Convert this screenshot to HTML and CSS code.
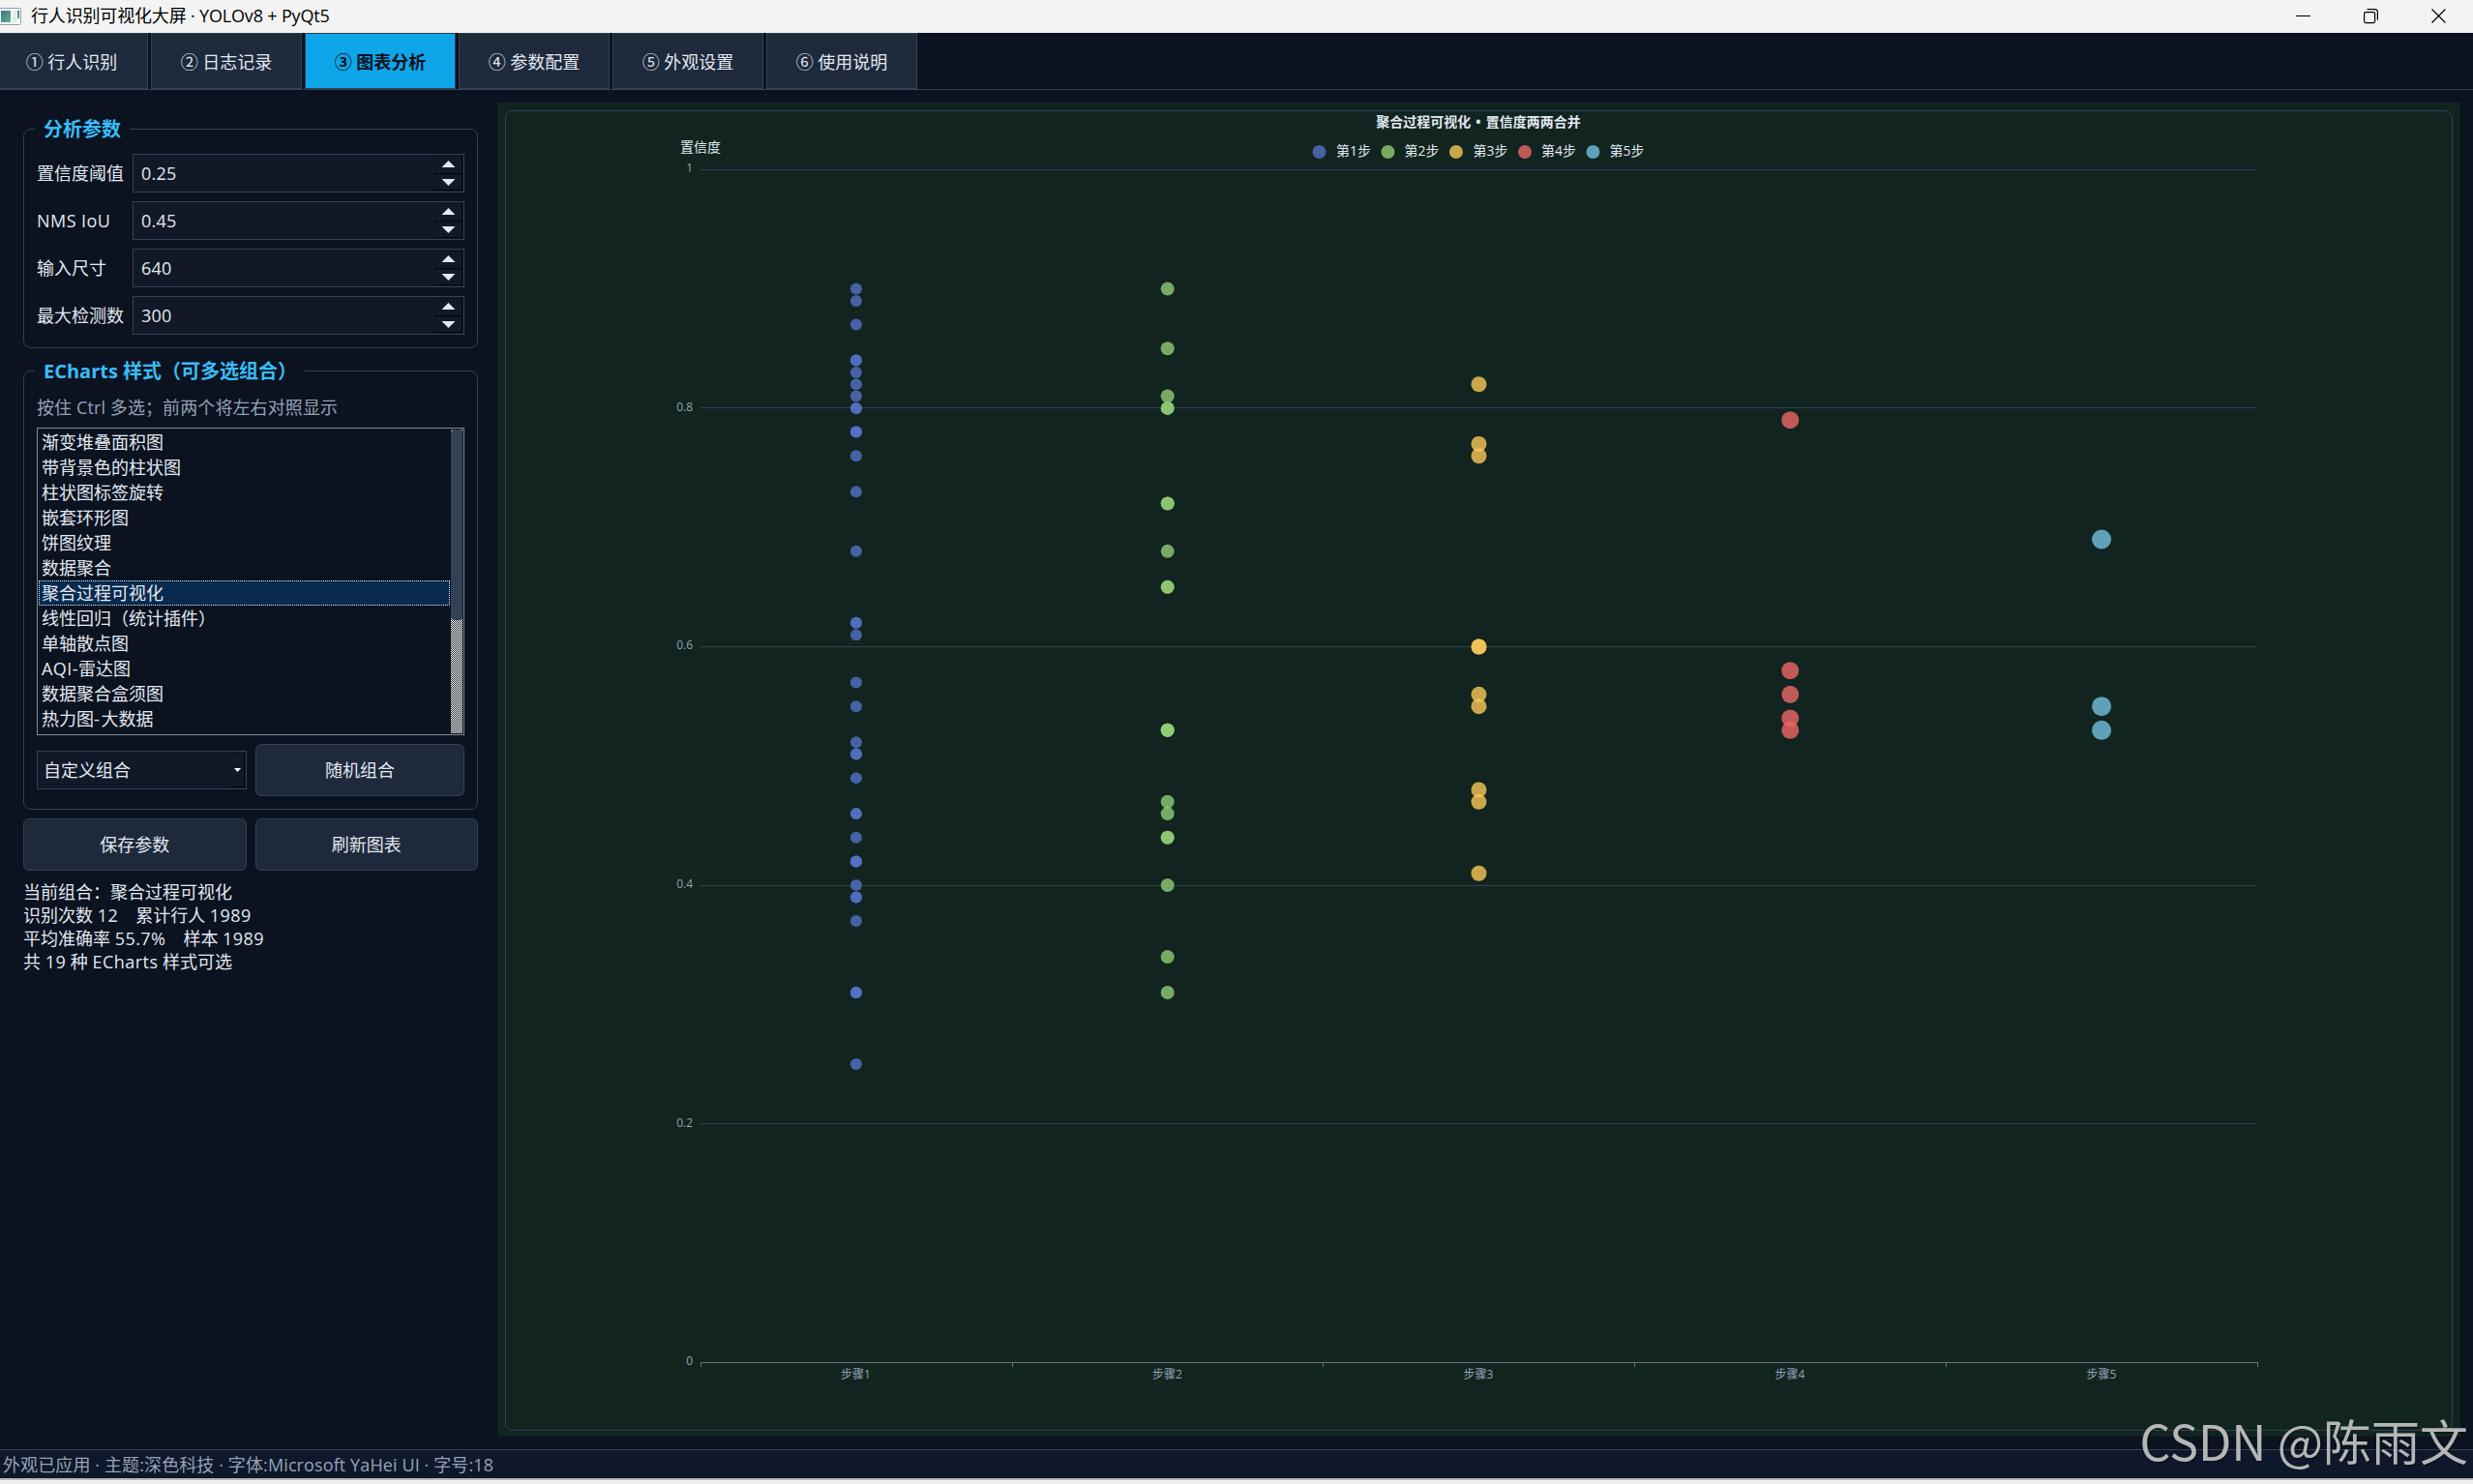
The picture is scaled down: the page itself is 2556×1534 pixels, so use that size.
FILE: index.html
```html
<!DOCTYPE html>
<html lang="zh-CN">
<head>
<meta charset="utf-8">
<title>行人识别可视化大屏 · YOLOv8 + PyQt5</title>
<link rel="stylesheet" href="styles.css">
</head>
<body>
<div class="window">
  <header class="titlebar">
    <svg class="app-icon" width="22" height="18" viewBox="0 0 22 18">
      <defs><linearGradient id="ig" x1="0" y1="0" x2="1" y2="1"><stop offset="0" stop-color="#3f6f8f"/><stop offset="1" stop-color="#5fb583"/></linearGradient></defs>
      <rect x="-1" y=".5" width="22.5" height="17" rx="1" fill="#f7f8f9" stroke="#9aa0a6"/>
      <rect x="1" y="3" width="10" height="12" fill="url(#ig)"/>
      <rect x="13" y="3" width="4" height="12" fill="#e6e9ec"/>
      <rect x="18" y="3" width="2" height="8" fill="url(#ig)"/>
    </svg>
    <span class="window-title">行人识别可视化大屏 · YOLOv8 + PyQt5</span>
    <div class="window-controls">
      <svg width="16" height="16" viewBox="0 0 16 16"><path d="M0 7.5h15" stroke="#000" fill="none"/></svg>
      <svg width="16" height="16" viewBox="0 0 16 16"><rect x=".6" y="3.6" width="11" height="11" rx="1.5" stroke="#000" stroke-width="1.2" fill="none"/><path d="M3.5 .7H12a2.4 2.4 0 0 1 2.4 2.4V11.5" stroke="#000" stroke-width="1.2" fill="none"/></svg>
      <svg width="16" height="16" viewBox="0 0 16 16"><path d="M.5 .5l14 14M14.5 .5l-14 14" stroke="#000" stroke-width="1.2" fill="none"/></svg>
    </div>
  </header>

  <nav class="tabs">
    <div class="tab first">① 行人识别</div>
    <div class="tab">② 日志记录</div>
    <div class="tab active">③ 图表分析</div>
    <div class="tab">④ 参数配置</div>
    <div class="tab">⑤ 外观设置</div>
    <div class="tab">⑥ 使用说明</div>
  </nav>

  <main class="content">
    <aside class="sidebar">
      <fieldset class="group params">
        <legend>分析参数</legend>
        <div class="row"><span class="label">置信度阈值</span><div class="spin"><span>0.25</span><div class="steps"><i class="up"></i><i class="down"></i></div></div></div>
        <div class="row"><span class="label latin">NMS IoU</span><div class="spin"><span>0.45</span><div class="steps"><i class="up"></i><i class="down"></i></div></div></div>
        <div class="row"><span class="label">输入尺寸</span><div class="spin"><span>640</span><div class="steps"><i class="up"></i><i class="down"></i></div></div></div>
        <div class="row"><span class="label">最大检测数</span><div class="spin"><span>300</span><div class="steps"><i class="up"></i><i class="down"></i></div></div></div>
      </fieldset>

      <fieldset class="group styles">
        <legend class="wide">ECharts 样式（可多选组合）</legend>
        <div class="hint">按住 Ctrl 多选；前两个将左右对照显示</div>
        <div class="listbox">
          <ul class="list">
            <li>渐变堆叠面积图</li>
            <li>带背景色的柱状图</li>
            <li>柱状图标签旋转</li>
            <li>嵌套环形图</li>
            <li>饼图纹理</li>
            <li>数据聚合</li>
            <li class="selected">聚合过程可视化</li>
            <li>线性回归（统计插件）</li>
            <li>单轴散点图</li>
            <li><span class="latin">AQI-</span>雷达图</li>
            <li>数据聚合盒须图</li>
            <li>热力图<span class="dash">-</span>大数据</li>
          </ul>
          <div class="scrollbar"><div class="thumb"></div></div>
        </div>
        <div class="combo-row">
          <div class="combo"><span>自定义组合</span><div class="drop"><i></i></div></div>
          <div class="button">随机组合</div>
        </div>
      </fieldset>

      <div class="actions">
        <div class="button">保存参数</div>
        <div class="button">刷新图表</div>
      </div>
      <div class="summary">
        <div>当前组合：聚合过程可视化</div>
        <div>识别次数 <span class="latin">12</span>　累计行人 <span class="latin">1989</span></div>
        <div>平均准确率 <span class="latin">55.7%</span>　样本 <span class="latin">1989</span></div>
        <div>共 <span class="latin">19</span> 种 <span class="latin">ECharts</span> 样式可选</div>
      </div>
    </aside>

    <section class="panel">
      <div class="frame">
        <svg class="chart" viewBox="523 115 2011 1363" width="2011" height="1363">
          <text class="chart-title" x="1528" y="131">聚合过程可视化 • 置信度两两合并</text>
          <g class="legend">
            <circle class="s1" cx="1363.5" cy="157" r="7"/><text x="1381" y="161">第1步</text>
            <circle class="s2" cx="1434.5" cy="157" r="7"/><text x="1451.5" y="161">第2步</text>
            <circle class="s3" cx="1505" cy="157" r="7"/><text x="1522.5" y="161">第3步</text>
            <circle class="s4" cx="1576" cy="157" r="7"/><text x="1593" y="161">第4步</text>
            <circle class="s5" cx="1646.5" cy="157" r="7"/><text x="1663.5" y="161">第5步</text>
          </g>
          <text class="axis-name" x="703" y="157">置信度</text>
          <path class="grid" d="M724 175.5H2333M724 421.5H2333M724 668.5H2333M724 915.5H2333M724 1161.5H2333"/>
          <path class="axis" d="M724 1408.5H2334M724.5 1408v5M1046.5 1408v5M1367.5 1408v5M1689.5 1408v5M2011.5 1408v5M2333.5 1408v5"/>
          <g class="ylabels">
            <text x="716" y="178">1</text><text x="716" y="425">0.8</text><text x="716" y="671">0.6</text><text x="716" y="918">0.4</text><text x="716" y="1165">0.2</text><text x="716" y="1411">0</text>
          </g>
          <g class="xlabels">
            <text x="884.5" y="1425">步骤1</text><text x="1206.5" y="1425">步骤2</text><text x="1528" y="1425">步骤3</text><text x="1850" y="1425">步骤4</text><text x="2172" y="1425">步骤5</text>
          </g>
          <svg class="plot" x="724" y="175.3" width="1609" height="1233">
            <g class="s1">
              <circle cx="10%" cy="10%" r="6"/><circle cx="10%" cy="11%" r="6"/><circle cx="10%" cy="13%" r="6"/>
              <circle cx="10%" cy="16%" r="6"/><circle cx="10%" cy="16%" r="6"/><circle cx="10%" cy="17%" r="6"/>
              <circle cx="10%" cy="18%" r="6"/><circle cx="10%" cy="19%" r="6"/><circle cx="10%" cy="20%" r="6"/><circle cx="10%" cy="20%" r="6"/>
              <circle cx="10%" cy="22%" r="6"/><circle cx="10%" cy="22%" r="6"/><circle cx="10%" cy="22%" r="6"/>
              <circle cx="10%" cy="24%" r="6"/><circle cx="10%" cy="27%" r="6"/><circle cx="10%" cy="32%" r="6"/>
              <circle cx="10%" cy="38%" r="6"/><circle cx="10%" cy="38%" r="6"/><circle cx="10%" cy="39%" r="6"/>
              <circle cx="10%" cy="43%" r="6"/><circle cx="10%" cy="45%" r="6"/><circle cx="10%" cy="48%" r="6"/>
              <circle cx="10%" cy="49%" r="6"/><circle cx="10%" cy="49%" r="6"/><circle cx="10%" cy="51%" r="6"/>
              <circle cx="10%" cy="54%" r="6"/><circle cx="10%" cy="54%" r="6"/><circle cx="10%" cy="56%" r="6"/>
              <circle cx="10%" cy="58%" r="6"/><circle cx="10%" cy="58%" r="6"/><circle cx="10%" cy="58%" r="6"/>
              <circle cx="10%" cy="60%" r="6"/><circle cx="10%" cy="61%" r="6"/><circle cx="10%" cy="61%" r="6"/>
              <circle cx="10%" cy="63%" r="6"/><circle cx="10%" cy="69%" r="6"/><circle cx="10%" cy="69%" r="6"/><circle cx="10%" cy="69%" r="6"/>
              <circle cx="10%" cy="75%" r="6"/>
            </g>
            <g class="s2">
              <circle cx="30%" cy="10%" r="7"/><circle cx="30%" cy="15%" r="7"/><circle cx="30%" cy="19%" r="7"/>
              <circle cx="30%" cy="20%" r="7"/><circle cx="30%" cy="20%" r="7"/><circle cx="30%" cy="28%" r="7"/><circle cx="30%" cy="28%" r="7"/>
              <circle cx="30%" cy="32%" r="7"/><circle cx="30%" cy="35%" r="7"/><circle cx="30%" cy="35%" r="7"/>
              <circle cx="30%" cy="47%" r="7"/><circle cx="30%" cy="47%" r="7"/><circle cx="30%" cy="47%" r="7"/>
              <circle cx="30%" cy="53%" r="7"/><circle cx="30%" cy="54%" r="7"/><circle cx="30%" cy="56%" r="7"/><circle cx="30%" cy="56%" r="7"/>
              <circle cx="30%" cy="60%" r="7"/><circle cx="30%" cy="66%" r="7"/><circle cx="30%" cy="69%" r="7"/>
            </g>
            <g class="s3">
              <circle cx="50%" cy="18%" r="8"/><circle cx="50%" cy="23%" r="8"/><circle cx="50%" cy="24%" r="8"/>
              <circle cx="50%" cy="40%" r="8"/><circle cx="50%" cy="40%" r="8"/><circle cx="50%" cy="44%" r="8"/><circle cx="50%" cy="45%" r="8"/>
              <circle cx="50%" cy="52%" r="8"/><circle cx="50%" cy="53%" r="8"/><circle cx="50%" cy="59%" r="8"/>
            </g>
            <g class="s4">
              <circle cx="70%" cy="21%" r="9"/><circle cx="70%" cy="42%" r="9"/><circle cx="70%" cy="44%" r="9"/>
              <circle cx="70%" cy="46%" r="9"/><circle cx="70%" cy="47%" r="9"/>
            </g>
            <g class="s5">
              <circle cx="90%" cy="31%" r="10"/><circle cx="90%" cy="45%" r="10"/><circle cx="90%" cy="47%" r="10"/>
            </g>
          </svg>
        </svg>
      </div>
    </section>
  </main>

  <footer class="statusbar">外观已应用 · 主题:深色科技 · 字体:Microsoft YaHei UI · 字号:18</footer>
  <div class="window-edge"></div>
  <div class="watermark">CSDN @陈雨文</div>
</div>
</body>
</html>
```
FILE: styles.css
```css
* { box-sizing: border-box; }
body {
  margin: 0;
  font-family: "Open Sans", "Noto Sans CJK SC", sans-serif;
  font-size: 18px;
  line-height: 24px;
  color: #e2e8f0;
  background: #0b1220;
  overflow: hidden;
}
.window {
  position: relative;
  display: flex;
  flex-direction: column;
  width: 2556px;
  height: 1534px;
}
.latin { letter-spacing: .45px; }
.dash { letter-spacing: 1.6px; }

.titlebar {
  display: flex;
  align-items: center;
  height: 34px;
  padding-right: 27px;
  background: #f3f3f3;
  color: #000;
}
.app-icon { margin-right: 10px; }
.window-title { padding-bottom: 2px; letter-spacing: -.17px; white-space: pre; }
.window-controls { display: flex; gap: 54px; margin-left: auto; }

.tabs {
  display: flex;
  gap: 3px;
  height: 59px;
  border-bottom: 1px solid #334155;
}
.tab {
  display: flex;
  align-items: center;
  justify-content: center;
  width: 156px;
  padding-top: 1px;
  border: 1px solid #334155;
  background: #1e293b;
  white-space: pre;
}
.tab.first { width: 153px; padding-right: 4px; border-left: 0; }
.tab.active { background: #0ea5e9; color: #0b1220; font-weight: 700; }

.content { display: flex; flex: 1; }
.sidebar { width: 514px; padding: 27px 20px 0 24px; }

.group {
  min-width: 0;
  width: 470px;
  margin: 0;
  padding: 12px 13px 13px;
  border: 1px solid #334155;
  border-radius: 8px;
}
.group legend {
  height: 27px;
  width: 98px;
  margin-left: -2px;
  padding: 0 9px;
  font-size: 20px;
  line-height: 27px;
  font-weight: 700;
  color: #38bdf8;
  white-space: nowrap;
}
.group legend.wide { width: 279px; }
.params { display: flex; flex-direction: column; }
.row { display: flex; align-items: center; height: 40px; margin-bottom: 9px; }
.row:last-child { margin-bottom: 0; }
.label { width: 99px; white-space: nowrap; }
.spin {
  display: flex;
  align-items: center;
  justify-content: space-between;
  flex: 1;
  height: 40px;
  padding: 1px 1px 1px 8px;
  border: 1px solid #334155;
  background: #111827;
  letter-spacing: .2px;
}
.steps { display: flex; flex-direction: column; width: 29px; height: 100%; }
.steps i {
  display: flex;
  flex: 1;
  align-items: center;
  justify-content: center;
  padding-bottom: 2px;
  border: 1px solid #0d1320;
  border-bottom-color: #03060c;
  border-right-color: #03060c;
}
.steps i::after {
  content: "";
  width: 14px;
  height: 7px;
  background: #e2e8f0;
  clip-path: polygon(50% 0, 100% 100%, 0 100%);
}
.steps i.down { padding-bottom: 0; }
.steps i.down::after { clip-path: polygon(0 0, 100% 0, 50% 100%); }

.styles { margin-top: 10px; }
.hint { height: 27px; margin-bottom: 6px; line-height: 25px; color: #94a3b8; letter-spacing: .1px; }
.listbox {
  display: flex;
  height: 318px;
  padding: 1px;
  border: 1px solid #828790;
}
.list { flex: 1; margin: 0 1px 0 0; padding: 0; list-style: none; }
.list li { height: 26px; padding-left: 3px; line-height: 26px; }
.list li.selected {
  padding-left: 2px;
  line-height: 24px;
  background: #082a4d;
  border: 1px dotted #d9ecff;
}
.scrollbar {
  width: 12px;
  background: repeating-conic-gradient(#ffffff 0 25%, #23272f 0 50%) 0 0 / 2px 2px;
}
.thumb { height: 197px; background: #334155; border-radius: 4px; }
.combo-row { display: flex; align-items: center; gap: 9px; margin-top: 9px; }
.combo {
  display: flex;
  align-items: center;
  justify-content: space-between;
  width: 217px;
  height: 40px;
  padding: 1px 1px 1px 6px;
  border: 1px solid #334155;
  background: #111827;
}
.drop {
  display: flex;
  align-items: center;
  justify-content: center;
  width: 15px;
  height: 100%;
  border: 1px solid #0d1320;
  border-right-color: #03060c;
  border-bottom-color: #03060c;
}
.drop i { width: 7px; height: 4px; background: #fff; clip-path: polygon(0 0, 100% 0, 50% 100%); }
.button {
  display: flex;
  flex: 1;
  align-items: center;
  justify-content: center;
  height: 54px;
  border: 1px solid #334155;
  border-radius: 6px;
  background: #1e293b;
}
.actions { display: flex; gap: 9px; margin-top: 9px; }
.summary { margin-top: 10px; }
.summary div { height: 24px; white-space: nowrap; }

.panel { flex: 1; margin: 13px 13px 13px 0; padding: 8px 8px 6px; background: #11241f; }
.frame { height: 1365px; border: 1px solid #334155; border-radius: 8px; }
.chart { display: block; }
.chart text { font-family: "Open Sans", "Noto Sans CJK SC", sans-serif; }
.chart-title { font-size: 14px; font-weight: 700; fill: #e2e8f0; text-anchor: middle; word-spacing: 1.5px; }
.legend text, .axis-name { font-size: 14px; fill: #e2e8f0; }
.ylabels { font-size: 12px; fill: #94a3b8; text-anchor: end; }
.xlabels { font-size: 12px; fill: #94a3b8; text-anchor: middle; }
.grid { stroke: #334155; fill: none; }
.axis { stroke: #6e7079; fill: none; }
.chart circle { fill-opacity: .8; }
.s1 { fill: #5470c6; }
.s2 { fill: #91cc75; }
.s3 { fill: #fac858; }
.s4 { fill: #ee6666; }
.s5 { fill: #73c0de; }

.statusbar {
  height: 30px;
  padding-left: 3px;
  border-top: 1px solid #334155;
  background: #0f172a;
  line-height: 30px;
  color: #94a3b8;
  letter-spacing: .11px;
  white-space: pre;
}
.window-edge { height: 6px; border-top: 2px solid #b9b9b9; background: #efefef; }
.watermark {
  position: absolute;
  right: 5px;
  bottom: 14px;
  font-family: "Noto Sans CJK SC", sans-serif;
  font-size: 50px;
  line-height: 64px;
  color: rgba(200, 200, 200, .9);
  text-shadow: 1px 1px 1px rgba(0, 0, 0, .4);
  white-space: pre;
}
```
